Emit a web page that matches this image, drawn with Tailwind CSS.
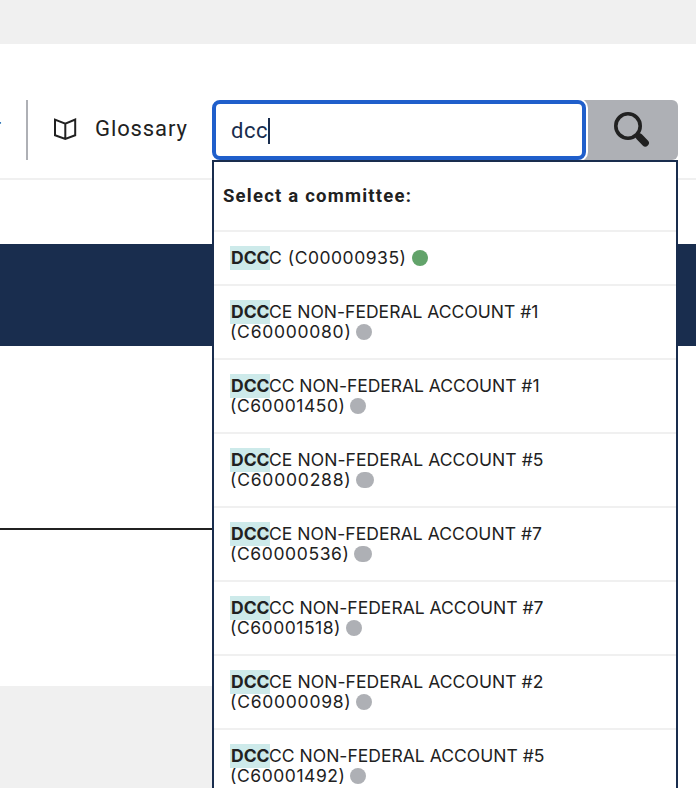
<!DOCTYPE html>
<html lang="en"><head><meta charset="utf-8"><title>Committee search</title>
<script src="https://cdn.jsdelivr.net/npm/@tailwindcss/browser@4"></script></head>
<body class="bg-white text-[#212121] font-[Roboto,'Liberation_Sans',sans-serif] overflow-hidden antialiased">
<div class="relative w-[696px] h-[788px] overflow-hidden flex flex-col">
<div class="h-11 bg-[#f0f0f0]"></div>
<header class="relative h-[136px] border-b-2 border-[#f0f0f0] flex pt-14">
  <div class="w-7 h-[60px] border-r-2 border-[#aeb0b5] relative overflow-hidden"><span class="absolute -left-[6.6px] top-[12px] text-[22px] leading-[30px]">r</span></div>
  <div class="w-[184px] h-[58px] flex items-center">
    <svg class="ml-[25px] w-6 h-6" viewBox="0 0 24 24" fill="none" stroke="#212121" stroke-width="2"><path d="M2 2.6 L12.3 6.7 L22.2 2.6 V18.2 L12.3 22 L2 18.2 Z M12.3 6.7 V22"/></svg>
    <span class="ml-[18px] text-[22px] leading-[30px] tracking-[0.9px] whitespace-nowrap">Glossary</span>
  </div>
  <div class="relative z-10 w-[374px] h-[60px] border-4 border-[#205fcb] rounded-[8px] ring-2 ring-white bg-white flex items-center pl-[15px] text-[#192d4e]">
    <span class="text-[22px] leading-[30px] tracking-[0.6px] mt-0.5">dcc</span><span class="w-0.5 h-[26px] bg-[#192d4e] mt-px"></span>
  </div>
  <div class="w-[100px] h-[60px] -ml-2 pl-2.5 bg-[#aeb0b5] rounded-r-[6px]">
    <svg class="w-[90px] h-[60px]" viewBox="0 0 90 60" fill="none" stroke="#212121"><circle cx="40" cy="26" r="12.2" stroke-width="3.6"/><path d="M48.5 34.5 L51 37" stroke-width="5"/><path d="M51.5 37 L57.3 43" stroke-width="7.2" stroke-linecap="round"/></svg>
  </div>
</header>
<div class="h-16"></div><div class="h-[102px] bg-[#192d4e]"></div><div class="h-[182px]"></div><div class="w-[660px] h-0.5 bg-[#212121]"></div><div class="h-[156px]"></div><div class="w-[660px] h-[102px] bg-[#f0f0f0]"></div>
<div class="absolute z-20 left-[212px] top-[160px] w-[466px] h-[640px] bg-white border-2 border-[#192d4e]">
  <div class="h-[68px] flex items-center pt-0.5 pl-[9px] font-bold text-[18.5px] tracking-[1.22px]">Select a committee:</div>
  <div id="rows" class="text-[17.5px] leading-5 whitespace-nowrap font-[Inter,Roboto,sans-serif]"></div>
</div></div>
<script>
// suffix, committee id, account number, dot position, right edge of the label
const data=[["C","C00000935","",412,406],["CE","C60000080","#1",356,538],["CC","C60001450","#1",350,539],["CE","C60000288","#5",356,543],["CE","C60000536","#7",354,541.5],["CC","C60001518","#7",346,543],["CE","C60000098","#2",356,543],["CC","C60001492","#5",350,544]];
document.getElementById('rows').innerHTML=data.map(([s,id,n,x,t],i)=>{
 const wide=id==="C60000288"||id==="C60000536";
 const dot=`<span class="shrink-0 ${wide?'w-[18px]':'w-4'} h-4 rounded-full ${i?'bg-[#aeb0b5]':'bg-[#62a36a]'}"></span>`;
 const idEnd=id==="C60001518"?340.5:x-5, hit='<b class="shrink-0 w-10 h-6 leading-6 pl-px bg-[#cdeaea]"><span data-fit="38.5">DCC</span></b>';
 const name=i?`${s} NON-FEDERAL ACCOUNT ${n}`:`${s} (${id})`;
 return `<div class="border-t-2 border-[#f0f0f0] pt-4 pl-4 ${i?'h-[74px]':'h-[54px]'}"><div class="h-5 flex items-center">${hit}<span class="-ml-px" style="width:${i?300:x-269}px"><span data-fit="${t-268.5}">${name}</span></span>${i?'':dot}</div>${i?`<div class="h-5 flex items-center"><span style="width:${x-230}px"><span data-fit="${idEnd-229.5}">(${id})</span></span>${dot}</div>`:''}</div>`;
}).join('');
// spread each label over its width
function fit(){
 document.querySelectorAll('[data-fit]').forEach(e=>{
  e.style.letterSpacing='0px';
  e.style.letterSpacing=(+e.dataset.fit-e.getBoundingClientRect().width)/e.textContent.length+'px';
 });
}
fit();
addEventListener('load',()=>{fit();requestAnimationFrame(fit);setTimeout(fit,50)});
document.fonts.ready.then(fit);
</script></body></html>
